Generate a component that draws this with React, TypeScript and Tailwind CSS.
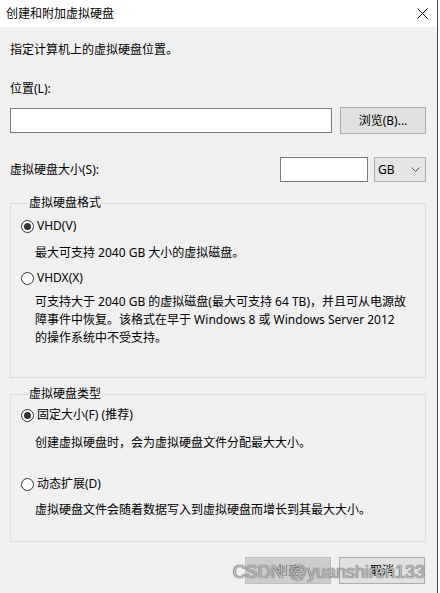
const font = "font-['Noto_Sans','Noto_Sans_CJK_SC',sans-serif]";

const Radio = ({ checked }: { checked?: boolean }) => (
  <span className="flex h-[13px] w-[13px] shrink-0 items-center justify-center rounded-full border border-[#333333] bg-white">
    {checked && <span className="h-[7px] w-[7px] rounded-full bg-[#333333]" />}
  </span>
);

const RadioRow = ({ label, checked, className }: { label: string; checked?: boolean; className?: string }) => (
  <div className={`flex h-[16px] items-center gap-[3px] ${className ?? ""}`}>
    <Radio checked={checked} />
    <span>{label}</span>
  </div>
);

const Button = ({ children, disabled }: { children: React.ReactNode; disabled?: boolean }) => (
  <button
    className={`flex h-[27px] w-[86px] items-center justify-center border ${
      disabled ? "border-[#bfbfbf] bg-[#cccccc] text-[#838383]" : "border-[#adadad] bg-[#e1e1e1] text-black"
    }`}
  >
    {children}
  </button>
);

export default function App() {
  return (
    <div className={`relative flex h-[593px] w-[440px] bg-white text-[12px] leading-[16px] text-black ${font}`}>
      <div className="flex w-[438px] flex-col border-r border-[#4a4a4a]">
        {/* title bar */}
        <div className="flex h-[27px] items-center justify-between bg-white pl-[6px] pr-[8px]">
          <span>创建和附加虚拟硬盘</span>
          <svg width="11" height="11" viewBox="0 0 11 11" className="mr-[1px]">
            <path d="M0.5 0.5 L10.5 10.5 M10.5 0.5 L0.5 10.5" stroke="#111" strokeWidth="1" />
          </svg>
        </div>

        {/* body */}
        <div className="flex flex-1 flex-col bg-[#f0f0f0] pl-[10px] pr-[11px] pt-[15px]">
          <p>指定计算机上的虚拟硬盘位置。</p>
          <p className="mt-[23px]">位置(L):</p>

          <div className="mt-[10px] flex h-[27px] items-center gap-[8px]">
            <div className="h-[25px] w-[322px] border border-[#7a7a7a] bg-white" />
            <Button>浏览(B)...</Button>
          </div>

          <div className="mt-[23px] flex h-[25px] items-center">
            <span className="flex-1">虚拟硬盘大小(S):</span>
            <div className="h-[25px] w-[88px] border border-[#7a7a7a] bg-white" />
            <div className="ml-[6px] flex h-[25px] w-[52px] items-center justify-between border border-[#adadad] bg-[#e5e5e5] pl-[3px] pr-[5px]">
              <span>GB</span>
              <svg width="9" height="5" viewBox="0 0 9 5">
                <path d="M0.5 0.5 L4.5 4.5 L8.5 0.5" fill="none" stroke="#555" strokeWidth="1" />
              </svg>
            </div>
          </div>

          <fieldset className="mt-[13px] border border-[#dcdcdc] pb-[30px] pl-[10px]">
            <legend className="ml-[7px] px-[1px]">虚拟硬盘格式</legend>
            <RadioRow className="mt-[7px]" label="VHD(V)" checked />
            <p className="ml-[14px] mt-[11px]">最大可支持 2040 GB 大小的虚拟磁盘。</p>
            <RadioRow className="mt-[9px]" label="VHDX(X)" />
            <p className="ml-[14px] mt-[7px] leading-[18px]">
              可支持大于 2040 GB 的虚拟磁盘(最大可支持 64 TB)，并且可从电源故
              <br />
              障事件中恢复。该格式在早于 Windows 8 或 Windows Server 2012
              <br />
              的操作系统中不受支持。
            </p>
          </fieldset>

          <fieldset className="mt-[8px] border border-[#dcdcdc] pb-[23px] pl-[10px]">
            <legend className="ml-[7px] px-[1px]">虚拟硬盘类型</legend>
            <RadioRow className="mt-[5px]" label="固定大小(F) (推荐)" checked />
            <p className="ml-[14px] mt-[12px]">创建虚拟硬盘时，会为虚拟硬盘文件分配最大大小。</p>
            <RadioRow className="mt-[25px]" label="动态扩展(D)" />
            <p className="ml-[14px] mt-[10px]">虚拟硬盘文件会随着数据写入到虚拟硬盘而增长到其最大大小。</p>
          </fieldset>

          <div className="mt-[15px] flex justify-end gap-[8px] pr-[1px]">
            <Button disabled>创建</Button>
            <Button>取消</Button>
          </div>
        </div>
      </div>

      {/* watermark */}
      <span className="absolute right-[15px] top-[561px] font-['Liberation_Sans',sans-serif] text-[18px] leading-[22px] text-[#bdbdbd] [text-shadow:0_0_1px_#555,0_0_1px_#555]">
        CSDN @yuanshiren133
      </span>
    </div>
  );
}
